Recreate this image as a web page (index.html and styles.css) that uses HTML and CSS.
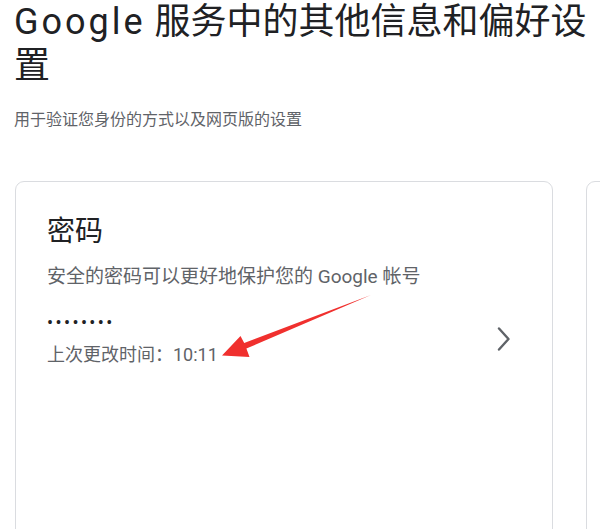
FILE: index.html
```html
<!DOCTYPE html>
<html lang="zh-CN">

<head>
    <meta charset="UTF-8">
    <meta name="viewport" content="width=device-width, initial-scale=1.0">
    <title>Google 服务中的其他信息和偏好设置</title>
    <link rel="stylesheet" href="styles.css">
</head>

<body>

    <main class="page">
        <h1 class="page-title"><span class="brand">Google</span> 服务中的其他信息和偏好设置</h1>
        <p class="page-subtitle">用于验证您身份的方式以及网页版的设置</p>

        <div class="cards">
            <section class="card">
                <h2 class="card-title">密码</h2>
                <p class="card-desc">安全的密码可以更好地保护您的 Google 帐号</p>

                <div class="card-row">
                    <div class="card-info">
                        <div class="dots">••••••••</div>
                        <div class="changed">上次更改时间：10:11</div>
                    </div>
                    <svg class="chevron" width="24" height="24" viewBox="0 0 24 24">
                        <polyline points="7,1.5 16.5,12 7,22.5" fill="none" stroke="#5f6368" stroke-width="2.4" stroke-linecap="round" stroke-linejoin="round" />
                    </svg>
                </div>
            </section>

            <section class="card"></section>
        </div>
    </main>

    <!-- annotation arrow drawn over the screenshot -->
    <svg class="arrow" width="600" height="529" viewBox="0 0 600 529">
        <polygon points="371,295 246.4,348.5 249.5,357 222,355.5 240.5,336 244.2,342.9" fill="#f0302e" />
    </svg>

</body>

</html>
```

FILE: styles.css
```css
html,
body {
    margin: 0;
    overflow: hidden;
}

body {
    font-family: Roboto, "Noto Sans CJK SC", sans-serif;
    background: #fff;
    color: #202124;
    width: 600px;
    height: 529px;
    position: relative;
}

.page {
    padding-left: 14px;
}

.page-title {
    margin: 0;
    font-size: 36px;
    font-weight: 400;
    line-height: 44px;
    color: #202124;
}

.brand {
    letter-spacing: 3px;
}

.page-subtitle {
    margin: 20px 0 0;
    font-size: 16px;
    line-height: 24px;
    color: #5f6368;
}

.cards {
    display: flex;
    gap: 33px;
    margin-top: 49px;
    padding-left: 1px;
}

.card {
    flex: 0 0 538px;
    box-sizing: border-box;
    height: 360px;
    border: 1px solid #dadce0;
    border-radius: 9px;
    padding: 32px 36px 32px 31px;
}

.card-title {
    margin: 0;
    font-size: 28px;
    font-weight: 400;
    line-height: 36px;
}

.card-desc {
    margin: 14px 0 0;
    font-size: 19px;
    line-height: 26px;
    color: #5f6368;
}

.card-row {
    display: flex;
    align-items: center;
    justify-content: space-between;
    margin-top: 21px;
}

.card-info {
    display: flex;
    flex-direction: column;
    gap: 8px;
}

.dots {
    font-size: 18px;
    line-height: 24px;
    letter-spacing: 2.4px;
    color: #202124;
}

.changed {
    font-size: 18px;
    line-height: 24px;
    color: #5f6368;
}

.chevron {
    display: block;
}

.arrow {
    position: absolute;
    top: 0;
    left: 0;
    pointer-events: none;
}
```
